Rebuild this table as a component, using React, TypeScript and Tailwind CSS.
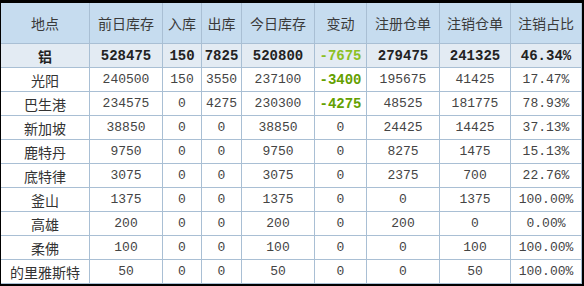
import React from "react";

const headers = ["地点", "前日库存", "入库", "出库", "今日库存", "变动", "注册仓单", "注销仓单", "注销占比"];

const rows: string[][] = [
  ["铝", "528475", "150", "7825", "520800", "-7675", "279475", "241325", "46.34%"],
  ["光阳", "240500", "150", "3550", "237100", "-3400", "195675", "41425", "17.47%"],
  ["巴生港", "234575", "0", "4275", "230300", "-4275", "48525", "181775", "78.93%"],
  ["新加坡", "38850", "0", "0", "38850", "0", "24425", "14425", "37.13%"],
  ["鹿特丹", "9750", "0", "0", "9750", "0", "8275", "1475", "15.13%"],
  ["底特律", "3075", "0", "0", "3075", "0", "2375", "700", "22.76%"],
  ["釜山", "1375", "0", "0", "1375", "0", "0", "1375", "100.00%"],
  ["高雄", "200", "0", "0", "200", "0", "200", "0", "0.00%"],
  ["柔佛", "100", "0", "0", "100", "0", "0", "100", "100.00%"],
  ["的里雅斯特", "50", "0", "0", "50", "0", "0", "50", "100.00%"],
];

const cjk = "font-['Noto_Sans_CJK_SC',sans-serif]";
const mono = "font-['Liberation_Mono','Noto_Sans_CJK_SC',monospace]";

export default function App() {
  return (
    <div className="w-[584px] h-[286px] bg-black pt-[3px] pl-[1px] pr-[2px] pb-[2px]">
      <div className="grid grid-cols-[88px_72px_38px_39px_72px_51px_72px_70px_70px] grid-rows-[40px_repeat(10,23px)] gap-[1px] bg-[#a9bfd4] border-r border-b border-[#a9bfd4] text-[#333]">
        {headers.map((h) => (
          <div
            key={h}
            className={`bg-[#c6dcef] flex items-center justify-center text-[14px] ${cjk} text-[#3a3a3a] whitespace-nowrap`}
          >
            {h}
          </div>
        ))}
        {rows.map((r, ri) =>
          r.map((c, ci) => {
            const isTotal = ri === 0;
            const neg = c.startsWith("-");
            const bg = isTotal ? "bg-[#e3ebf3]" : "bg-white";
            let cls = "";
            if (ci === 0) {
              cls = `${cjk} text-[14px] ${isTotal ? "font-bold text-[#222]" : "text-[#333]"}`;
            } else if (isTotal) {
              cls = `${mono} font-bold text-[14px] ${neg ? "text-[#8cc022]" : "text-[#222]"}`;
            } else {
              cls = `${mono} text-[13px] ${neg ? "font-bold text-[14px] text-[#64a000]" : "text-[#444]"}`;
            }
            return (
              <div
                key={`${ri}-${ci}`}
                className={`${bg} flex items-center justify-center whitespace-nowrap leading-none ${cls}`}
              >
                {c}
              </div>
            );
          })
        )}
      </div>
    </div>
  );
}
